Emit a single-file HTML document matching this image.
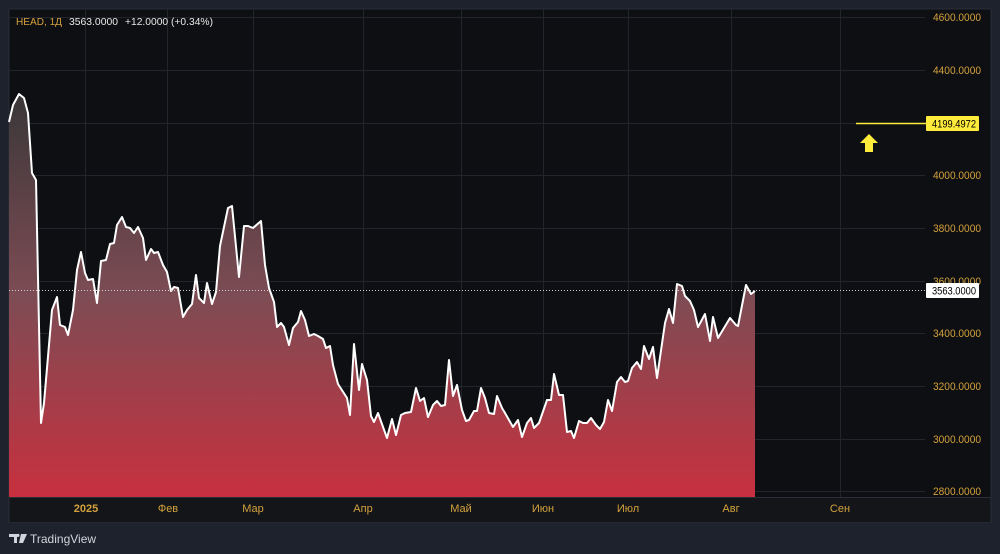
<!DOCTYPE html>
<html><head><meta charset="utf-8"><style>
html,body{margin:0;padding:0;background:#1e222d;width:1000px;height:554px;overflow:hidden}
svg{display:block}
text{font-family:"Liberation Sans","DejaVu Sans",sans-serif}
</style></head><body>
<svg width="1000" height="554" viewBox="0 0 1000 554" xmlns="http://www.w3.org/2000/svg">
<defs>
<linearGradient id="g" x1="0" y1="94" x2="0" y2="497" gradientUnits="userSpaceOnUse">
<stop offset="0" stop-color="#3a3739"/>
<stop offset="0.5" stop-color="#7d4c54"/>
<stop offset="1" stop-color="#c8303f"/>
</linearGradient>
</defs>
<rect x="0" y="0" width="1000" height="554" fill="#1e222d"/>
<rect x="9" y="9" width="982" height="513" fill="#0e0f12" stroke="#2a2e39" stroke-width="1"/>
<rect x="9.5" y="497" width="981" height="25" fill="#131519"/>
<line x1="9" y1="497.5" x2="991" y2="497.5" stroke="#2a2e39"/>
<g stroke="#22252c" stroke-width="1">
<line x1="9" y1="17.5" x2="925" y2="17.5"/><line x1="9" y1="70.5" x2="925" y2="70.5"/>
<line x1="9" y1="123.5" x2="925" y2="123.5"/><line x1="9" y1="175.5" x2="925" y2="175.5"/>
<line x1="9" y1="228.5" x2="925" y2="228.5"/><line x1="9" y1="281.5" x2="925" y2="281.5"/>
<line x1="9" y1="333.5" x2="925" y2="333.5"/><line x1="9" y1="386.5" x2="925" y2="386.5"/>
<line x1="9" y1="439.5" x2="925" y2="439.5"/><line x1="9" y1="491.5" x2="925" y2="491.5"/>
<line x1="85.5" y1="9" x2="85.5" y2="497"/><line x1="167.5" y1="9" x2="167.5" y2="497"/>
<line x1="253.5" y1="9" x2="253.5" y2="497"/><line x1="363.5" y1="9" x2="363.5" y2="497"/>
<line x1="461.5" y1="9" x2="461.5" y2="497"/><line x1="543.5" y1="9" x2="543.5" y2="497"/>
<line x1="628.5" y1="9" x2="628.5" y2="497"/><line x1="731.5" y1="9" x2="731.5" y2="497"/>
<line x1="840.5" y1="9" x2="840.5" y2="497"/>
</g>
<path fill="url(#g)" d="M9,122 L13,105 L19,94 L24,98 L28,113 L32,173 L36,180 L41,423 L44,403 L52,310 L57,297 L60,325 L65,327 L68,335 L73,310 L77,270 L81,252 L85,273 L88,280 L93,279 L97,303 L101,261 L106,260 L110,244 L114,243 L117,225 L122,217 L126,227 L130,228 L134,233 L138,227 L143,238 L146,260 L151,249 L154,253 L158,252 L163,265 L167,272 L171,291 L174,287 L178,288 L183,317 L187,310 L192,304 L196,275 L199,298 L204,303 L207,283 L212,304 L216,292 L220,246 L224,227 L228,208 L232,206 L239,277 L244,226 L248,226 L253,228 L261,221 L265,265 L269,288 L274,302 L277,327 L281,323 L284,327 L289,345 L293,328 L298,322 L301,311 L305,320 L309,336 L314,334 L318,336 L323,339 L326,348 L330,346 L333,365 L338,384 L347,398 L350,415 L354,344 L359,390 L362,364 L367,380 L371,416 L374,422 L378,413 L387,438 L392,419 L396,435 L401,415 L405,413 L411,412 L416,388 L420,401 L424,398 L428,417 L433,405 L437,401 L441,406 L445,405 L449,360 L453,396 L457,385 L462,410 L466,421 L469,420 L474,411 L477,411 L481,388 L485,398 L489,413 L494,414 L497,396 L502,408 L505,413 L513,427 L518,420 L522,437 L527,423 L531,418 L534,428 L539,423 L547,400 L551,400 L554,374 L559,395 L563,395 L567,432 L571,431 L574,438 L579,421 L583,423 L587,423 L591,418 L596,425 L600,429 L604,422 L608,400 L612,411 L617,382 L621,377 L625,382 L628,381 L632,368 L637,362 L641,369 L644,346 L649,359 L653,347 L657,378 L665,323 L669,309 L673,323 L677,284 L682,286 L685,296 L690,301 L694,310 L698,327 L705,314 L710,341 L713,317 L718,338 L730,318 L736,325 L738,326 L746,285 L751,294 L755,291 L755,497 L9,497 Z"/>
<path fill="none" stroke="#ffffff" stroke-width="2" stroke-linejoin="round" d="M9,122 L13,105 L19,94 L24,98 L28,113 L32,173 L36,180 L41,423 L44,403 L52,310 L57,297 L60,325 L65,327 L68,335 L73,310 L77,270 L81,252 L85,273 L88,280 L93,279 L97,303 L101,261 L106,260 L110,244 L114,243 L117,225 L122,217 L126,227 L130,228 L134,233 L138,227 L143,238 L146,260 L151,249 L154,253 L158,252 L163,265 L167,272 L171,291 L174,287 L178,288 L183,317 L187,310 L192,304 L196,275 L199,298 L204,303 L207,283 L212,304 L216,292 L220,246 L224,227 L228,208 L232,206 L239,277 L244,226 L248,226 L253,228 L261,221 L265,265 L269,288 L274,302 L277,327 L281,323 L284,327 L289,345 L293,328 L298,322 L301,311 L305,320 L309,336 L314,334 L318,336 L323,339 L326,348 L330,346 L333,365 L338,384 L347,398 L350,415 L354,344 L359,390 L362,364 L367,380 L371,416 L374,422 L378,413 L387,438 L392,419 L396,435 L401,415 L405,413 L411,412 L416,388 L420,401 L424,398 L428,417 L433,405 L437,401 L441,406 L445,405 L449,360 L453,396 L457,385 L462,410 L466,421 L469,420 L474,411 L477,411 L481,388 L485,398 L489,413 L494,414 L497,396 L502,408 L505,413 L513,427 L518,420 L522,437 L527,423 L531,418 L534,428 L539,423 L547,400 L551,400 L554,374 L559,395 L563,395 L567,432 L571,431 L574,438 L579,421 L583,423 L587,423 L591,418 L596,425 L600,429 L604,422 L608,400 L612,411 L617,382 L621,377 L625,382 L628,381 L632,368 L637,362 L641,369 L644,346 L649,359 L653,347 L657,378 L665,323 L669,309 L673,323 L677,284 L682,286 L685,296 L690,301 L694,310 L698,327 L705,314 L710,341 L713,317 L718,338 L730,318 L736,325 L738,326 L746,285 L751,294 L755,291"/>
<line x1="9" y1="290.5" x2="925" y2="290.5" stroke="#d0d0d0" stroke-width="1" stroke-dasharray="1,2"/>
<line x1="856" y1="123.5" x2="926" y2="123.5" stroke="#ffeb3b" stroke-width="1.5"/>
<path d="M869,134 L878,143 L873,143 L873,152 L865,152 L865,143 L860,143 Z" fill="#ffeb3b"/>
<g font-size="11" fill="#d4a23d">
<text x="933" y="21" textLength="48" lengthAdjust="spacingAndGlyphs">4600.0000</text>
<text x="933" y="74" textLength="48" lengthAdjust="spacingAndGlyphs">4400.0000</text>
<text x="933" y="179" textLength="48" lengthAdjust="spacingAndGlyphs">4000.0000</text>
<text x="933" y="232" textLength="48" lengthAdjust="spacingAndGlyphs">3800.0000</text>
<text x="933" y="285" textLength="48" lengthAdjust="spacingAndGlyphs">3600.0000</text>
<text x="933" y="337" textLength="48" lengthAdjust="spacingAndGlyphs">3400.0000</text>
<text x="933" y="390" textLength="48" lengthAdjust="spacingAndGlyphs">3200.0000</text>
<text x="933" y="443" textLength="48" lengthAdjust="spacingAndGlyphs">3000.0000</text>
<text x="933" y="495" textLength="48" lengthAdjust="spacingAndGlyphs">2800.0000</text>
</g>
<rect x="926" y="116" width="53" height="15" fill="#ffeb3b" rx="1"/>
<text x="932" y="127.5" font-size="11" fill="#000" textLength="44" lengthAdjust="spacingAndGlyphs">4199.4972</text>
<rect x="926" y="283" width="53" height="15" fill="#ffffff" rx="1"/>
<text x="932" y="294.5" font-size="11" fill="#000" textLength="44" lengthAdjust="spacingAndGlyphs">3563.0000</text>
<g font-size="11" fill="#d4a23d" text-anchor="middle">
<text x="86" y="512" font-weight="bold">2025</text><text x="168" y="512">Фев</text>
<text x="253" y="512">Мар</text><text x="363" y="512">Апр</text>
<text x="461" y="512">Май</text><text x="543" y="512">Июн</text>
<text x="628" y="512">Июл</text><text x="731" y="512">Авг</text>
<text x="840" y="512">Сен</text>
</g>
<text x="16" y="25" font-size="10.5" fill="#d4a23d" textLength="46" lengthAdjust="spacingAndGlyphs">HEAD, 1Д</text>
<text x="69" y="25" font-size="10.5" fill="#e8e8e8" textLength="49" lengthAdjust="spacingAndGlyphs">3563.0000</text>
<text x="125" y="25" font-size="10.5" fill="#e8e8e8" textLength="88" lengthAdjust="spacingAndGlyphs">+12.0000 (+0.34%)</text>
<path d="M9,534 L17,534 L17,543 L14,543 L14,537 L9,537 Z M18,537 A1.6,1.6 0 1 1 18.01,537 Z M21,534 L27,534 L23,543 L19,543 Z" fill="#d1d4dc"/>
<text x="30" y="543" font-size="12" fill="#d1d4dc">TradingView</text>
</svg>
</body></html>
